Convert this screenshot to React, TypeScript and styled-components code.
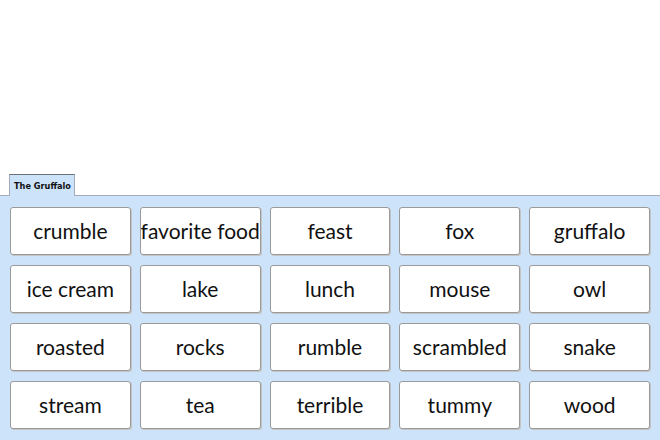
import React from "react";
import styled, { createGlobalStyle } from "styled-components";

const words = [
  "crumble", "favorite food", "feast", "fox", "gruffalo",
  "ice cream", "lake", "lunch", "mouse", "owl",
  "roasted", "rocks", "rumble", "scrambled", "snake",
  "stream", "tea", "terrible", "tummy", "wood",
];

const GlobalStyle = createGlobalStyle`
  html, body {
    margin: 0;
    padding: 0;
    background: #ffffff;
  }
`;

const App = () => {
  return (
    <>
      <GlobalStyle />
      <Page>
        <Blank />
        <TabBar>
          <Tab>The Gruffalo</Tab>
        </TabBar>
        <Panel>
          {words.map((w) => (
            <WordCard key={w}>{w}</WordCard>
          ))}
        </Panel>
      </Page>
    </>
  );
};

const Page = styled.div`
  display: flex;
  flex-direction: column;
  width: 660px;
  height: 440px;
  overflow: hidden;
`;

const Blank = styled.div`
  flex: 1;
  background: #ffffff;
`;

const TabBar = styled.div`
  display: flex;
  padding-left: 9px;
  position: relative;
  z-index: 1;
  margin-bottom: -1px;
`;

const Tab = styled.div`
  height: 21px;
  padding: 0 3px 0 4px;
  display: flex;
  align-items: center;
  background: #cde3fa;
  border: 1px solid #a3acb8;
  border-top-color: #6b6f75;
  border-bottom: none;
  font-family: "DejaVu Sans", sans-serif;
  font-weight: bold;
  font-size: 8.2px;
  color: #111;
`;

const Panel = styled.div`
  display: grid;
  grid-template-columns: repeat(5, 1fr);
  grid-auto-rows: 48px;
  gap: 10px 9px;
  padding: 11px 10px 11px 10px;
  background: #cde3fa;
  border-top: 1px solid #a3acb8;
`;

const WordCard = styled.div`
  display: flex;
  align-items: center;
  justify-content: center;
  padding-bottom: 2px;
  background: #ffffff;
  border: 1px solid #9a9a9a;
  border-radius: 3px;
  box-shadow: 1px 1px 0 #c4c4c4;
  font-family: Lato, sans-serif;
  font-weight: 400;
  font-size: 21px;
  color: #111;
  white-space: nowrap;
  overflow: hidden;
`;

export default App;
